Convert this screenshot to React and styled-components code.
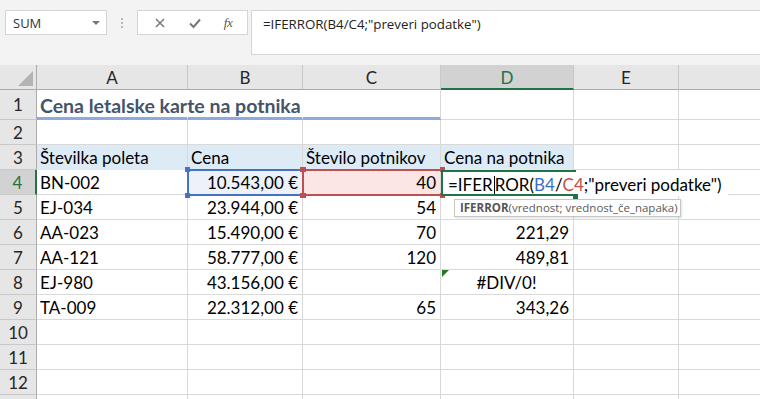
import React from "react";
import styled, { createGlobalStyle } from "styled-components";

const Global = createGlobalStyle`
  html, body { margin: 0; padding: 0; background: #fff; overflow: hidden; }
  body { font-family: Lato, "Open Sans", sans-serif; }
`;

const COLS = [37, 151, 115, 138, 133, 105, 200];
const ROWH = [25, 30, 25, 25, 25, 25, 25, 25, 25, 25, 25, 25, 25, 25];

const Page = styled.div`
  width: 760px;
  height: 399px;
  overflow: hidden;
  display: flex;
  flex-direction: column;
`;

const Toolbar = styled.div`
  height: 65px;
  flex: none;
  background: #f3f3f3;
  display: flex;
  align-items: flex-start;
  padding: 10px 0 0 5px;
  box-sizing: border-box;
`;

const NameBox = styled.div`
  width: 102px;
  height: 25px;
  box-sizing: border-box;
  background: #fff;
  border: 1px solid #d5d5d5;
  display: flex;
  align-items: center;
  justify-content: space-between;
  padding: 0 6px 0 7px;
  font-family: "Open Sans", sans-serif;
  font-size: 13px;
  color: #333;
`;

const Caret = styled.span`
  width: 0;
  height: 0;
  border-left: 4px solid transparent;
  border-right: 4px solid transparent;
  border-top: 4px solid #777;
`;

const Grip = styled.div`
  width: 30px;
  height: 25px;
  display: flex;
  flex-direction: column;
  align-items: center;
  justify-content: center;
  gap: 2px;
  & > span { width: 2px; height: 2px; background: #b8b8b8; }
`;

const FxBox = styled.div`
  width: 111px;
  height: 25px;
  box-sizing: border-box;
  background: #fff;
  border: 1px solid #d5d5d5;
  display: flex;
  align-items: center;
  justify-content: space-around;
  padding: 0 4px;
`;

const FxLabel = styled.span`
  font-family: "Liberation Serif", serif;
  font-style: italic;
  font-size: 13px;
  color: #555;
  letter-spacing: -0.5px;
`;

const FormulaInput = styled.div`
  margin-left: 3px;
  flex: 1;
  height: 45px;
  box-sizing: border-box;
  background: #fff;
  border: 1px solid #d5d5d5;
  border-right: none;
  padding: 4px 0 0 11px;
  font-family: "Open Sans", sans-serif;
  font-size: 13.3px;
  color: #222;
  line-height: 18px;
`;

const Sheet = styled.div`
  position: relative;
  flex: 1;
  display: grid;
  grid-template-columns: ${COLS.map((w) => w + "px").join(" ")};
  grid-template-rows: ${ROWH.map((h) => h + "px").join(" ")};
  font-family: Lato, "Open Sans", sans-serif;
  font-size: 17px;
  color: #000;
`;

const Corner = styled.div`
  background: #e6e6e6;
  border-right: 1px solid #ababab;
  border-bottom: 1px solid #ababab;
  box-sizing: border-box;
  display: flex;
  align-items: flex-end;
  justify-content: flex-end;
  padding: 0 3px 3px 0;
`;

const CornerTri = styled.div`
  width: 0;
  height: 0;
  border-left: 15px solid transparent;
  border-bottom: 15px solid #b3b3b3;
`;

const ColHead = styled.div`
  background: ${(p) => (p.$active ? "#d2d2d2" : "#e6e6e6")};
  border-right: 1px solid #c8c8c8;
  border-bottom: ${(p) => (p.$active ? "2px solid #217346" : "1px solid #ababab")};
  box-sizing: border-box;
  display: flex;
  align-items: center;
  justify-content: center;
  color: ${(p) => (p.$active ? "#217346" : "#262626")};
  font-size: 17px;
  padding-top: ${(p) => (p.$active ? "1px" : "0")};
`;

const RowHead = styled.div`
  background: ${(p) => (p.$active ? "#d2d2d2" : "#e6e6e6")};
  border-right: ${(p) => (p.$active ? "2px solid #217346" : "1px solid #ababab")};
  border-bottom: 1px solid #c8c8c8;
  box-sizing: border-box;
  display: flex;
  align-items: center;
  justify-content: center;
  color: ${(p) => (p.$active ? "#217346" : "#262626")};
  font-size: 17px;
`;

const Cell = styled.div`
  position: relative;
  box-sizing: border-box;
  border-right: 1px solid ${(p) => (p.$noRight ? "transparent" : "#d9d9d9")};
  border-bottom: ${(p) => p.$under || "1px solid #d9d9d9"};
  background: ${(p) => p.$fill || "#fff"};
  display: flex;
  align-items: flex-end;
  justify-content: ${(p) =>
    p.$align === "right" ? "flex-end" : p.$align === "center" ? "center" : "flex-start"};
  padding: 0 4px 1px 3px;
  white-space: nowrap;
  overflow: visible;
  font-weight: ${(p) => (p.$bold ? 700 : 400)};
  color: ${(p) => p.$color || "#000"};
  font-size: ${(p) => p.$size || "17px"};
  line-height: 21px;
  z-index: ${(p) => (p.$over ? 1 : 0)};
`;

const ErrTri = styled.span`
  position: absolute;
  left: 1px;
  top: 0;
  width: 0;
  height: 0;
  border-top: 7px solid #1e7b1e;
  border-right: 7px solid transparent;
`;

const SelBox = styled.div`
  position: absolute;
  box-sizing: border-box;
  border: 2px solid ${(p) => p.$c};
  pointer-events: none;
  z-index: 3;
`;

const Handle = styled.span`
  position: absolute;
  width: 5px;
  height: 5px;
  background: ${(p) => p.$c};
  ${(p) => (p.$t ? "top: -4px;" : "bottom: -4px;")}
  ${(p) => (p.$l ? "left: -4px;" : "right: -4px;")}
`;

const EditBox = styled.div`
  position: absolute;
  left: 441px;
  top: 105px;
  height: 26px;
  box-sizing: border-box;
  background: #fff;
  z-index: 4;
  display: flex;
  align-items: flex-end;
  padding: 0 6px 1px 5px;
  font-size: 17px;
  line-height: 21px;
  white-space: nowrap;
  border-left: 2px solid #217346;
`;

const EditLine = styled.span`
  position: absolute;
  left: 0;
  width: 133px;
  height: 2px;
  background: #217346;
  ${(p) => (p.$top ? "top: 0;" : "bottom: 0;")}
`;

const EditHandle = styled.span`
  position: absolute;
  left: 130px;
  bottom: -3px;
  width: 5px;
  height: 5px;
  background: #217346;
`;

const Ref = styled.span`
  color: ${(p) => p.$c};
`;

const CursorBar = styled.span`
  display: inline-block;
  width: 1px;
  height: 19px;
  background: #000;
  vertical-align: -3px;
  margin: 0 0 0 1px;
`;

const Tip = styled.div`
  position: absolute;
  left: 454px;
  top: 134px;
  width: 227px;
  height: 18px;
  box-sizing: border-box;
  background: #fff;
  border: 1px solid #c6c6c6;
  box-shadow: 1px 1px 2px rgba(0, 0, 0, 0.12);
  z-index: 5;
  font-family: "Open Sans", sans-serif;
  font-size: 11.5px;
  color: #5a5a5a;
  line-height: 15px;
  padding: 0 0 0 5px;
  white-space: nowrap;
`;

const TipFn = styled.b`
  font-weight: 700;
  color: #555;
`;

const Icon = ({ children }) => (
  <svg width="14" height="14" viewBox="0 0 14 14">{children}</svg>
);

const rows = [
  ["BN-002", "10.543,00 €", "40", ""],
  ["EJ-034", "23.944,00 €", "54", "443,41"],
  ["AA-023", "15.490,00 €", "70", "221,29"],
  ["AA-121", "58.777,00 €", "120", "489,81"],
  ["EJ-980", "43.156,00 €", "", "#DIV/0!"],
  ["TA-009", "22.312,00 €", "65", "343,26"],
];

const letters = ["A", "B", "C", "D", "E", "F"];

function EmptyCells({ n }) {
  return Array.from({ length: n }, (_, i) => <Cell key={i} />);
}

export default function App() {
  const titleUnder = "3px solid #8eaadb";
  const hdrFill = "#ddebf7";
  return (
    <Page>
      <Global />
      <Toolbar>
        <NameBox>
          SUM
          <Caret />
        </NameBox>
        <Grip>
          <span />
          <span />
          <span />
        </Grip>
        <FxBox>
          <Icon>
            <path d="M3 3 L11 11 M11 3 L3 11" stroke="#777" strokeWidth="1.5" fill="none" />
          </Icon>
          <Icon>
            <path d="M2 7.5 L5.5 11 L12 3.5" stroke="#777" strokeWidth="2" fill="none" />
          </Icon>
          <FxLabel>fx</FxLabel>
        </FxBox>
        <FormulaInput>=IFERROR(B4/C4;"preveri podatke")</FormulaInput>
      </Toolbar>

      <Sheet>
        <Corner>
          <CornerTri />
        </Corner>
        {letters.map((l) => (
          <ColHead key={l} $active={l === "D"}>
            {l}
          </ColHead>
        ))}

        {/* row 1 */}
        <RowHead>1</RowHead>
        <Cell $bold $color="#44546a" $size="19.5px" $noRight $under={titleUnder} $over>
          Cena letalske karte na potnika
        </Cell>
        <Cell $noRight $under={titleUnder} />
        <Cell $under={titleUnder} />
        <EmptyCells n={3} />

        {/* row 2 */}
        <RowHead>2</RowHead>
        <EmptyCells n={6} />

        {/* row 3 */}
        <RowHead>3</RowHead>
        <Cell $fill={hdrFill} $under="1px solid #ddebf7">Številka poleta</Cell>
        <Cell $fill={hdrFill} $under="1px solid #ddebf7">Cena</Cell>
        <Cell $fill={hdrFill} $under="1px solid #ddebf7">Število potnikov</Cell>
        <Cell $fill={hdrFill} $under="1px solid #ddebf7">Cena na potnika</Cell>
        <EmptyCells n={2} />

        {rows.map((r, i) => (
          <React.Fragment key={i}>
            <RowHead $active={i === 0}>{i + 4}</RowHead>
            <Cell>{r[0]}</Cell>
            <Cell $align="right" $fill={i === 0 ? "#edf2fa" : undefined}>
              {r[1]}
            </Cell>
            <Cell $align="right" $fill={i === 0 ? "#fbe5e5" : undefined}>
              {r[2]}
            </Cell>
            <Cell $align={r[3].startsWith("#") ? "center" : "right"}>
              {r[3].startsWith("#") && <ErrTri />}
              {r[3]}
            </Cell>
            <EmptyCells n={2} />
          </React.Fragment>
        ))}

        {[10, 11, 12, 13].map((n) => (
          <React.Fragment key={n}>
            <RowHead>{n}</RowHead>
            <EmptyCells n={6} />
          </React.Fragment>
        ))}

        <SelBox $c="#4472c4" style={{ left: 187, top: 104, width: 117, height: 27 }}>
          <Handle $c="#4472c4" $t $l />
          <Handle $c="#4472c4" $t />
          <Handle $c="#4472c4" $l />
          <Handle $c="#4472c4" />
        </SelBox>
        <SelBox $c="#c0504d" style={{ left: 302, top: 104, width: 141, height: 27 }}>
          <Handle $c="#c0504d" $t $l />
          <Handle $c="#c0504d" $t />
          <Handle $c="#c0504d" $l />
          <Handle $c="#c0504d" />
        </SelBox>

        <EditBox>
          <EditLine $top />
          <EditLine />
          <EditHandle />
          =IFER
          <CursorBar />
          ROR(<Ref $c="#3a6fc4">B4</Ref>/<Ref $c="#c0504d">C4</Ref>;"preveri podatke")
        </EditBox>

        <Tip>
          <TipFn>IFERROR</TipFn>(vrednost; vrednost_če_napaka)
        </Tip>
      </Sheet>
    </Page>
  );
}
